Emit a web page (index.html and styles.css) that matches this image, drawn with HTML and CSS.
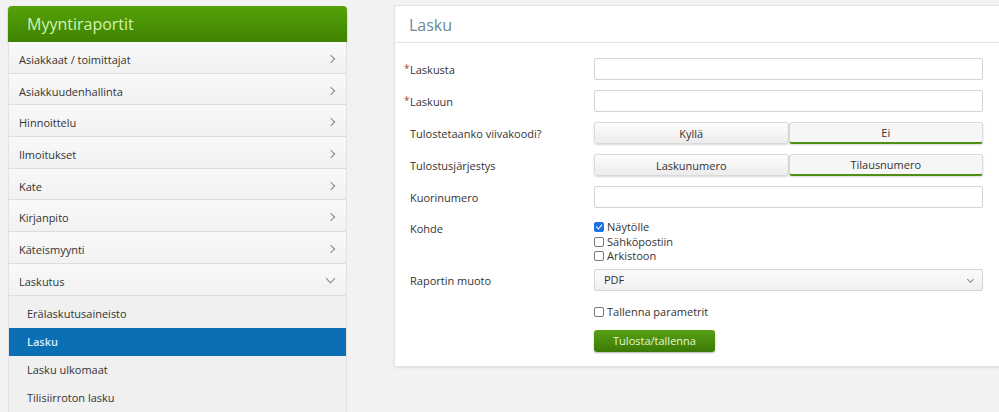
FILE: index.html
```html
<!DOCTYPE html>
<html lang="fi">
<head>
    <meta charset="UTF-8">
    <meta name="viewport" content="width=device-width, initial-scale=1.0">
    <title>Myyntiraportit - Lasku</title>
    <link rel="stylesheet" href="styles.css">
</head>
<body>
<div class="page">
    <nav class="sidebar">
        <div class="sidebar-title">Myyntiraportit</div>
        <ul class="menu">
            <li class="menu-item">Asiakkaat / toimittajat<span class="chev"></span></li>
            <li class="menu-item">Asiakkuudenhallinta<span class="chev"></span></li>
            <li class="menu-item">Hinnoittelu<span class="chev"></span></li>
            <li class="menu-item">Ilmoitukset<span class="chev"></span></li>
            <li class="menu-item">Kate<span class="chev"></span></li>
            <li class="menu-item">Kirjanpito<span class="chev"></span></li>
            <li class="menu-item">Käteismyynti<span class="chev"></span></li>
            <li class="menu-item open">Laskutus<span class="chev down"></span></li>
        </ul>
        <ul class="submenu">
            <li>Erälaskutusaineisto</li>
            <li class="active">Lasku</li>
            <li>Lasku ulkomaat</li>
            <li>Tilisiirroton lasku</li>
        </ul>
    </nav>

    <section class="panel">
        <h2 class="panel-title">Lasku</h2>
        <form class="report-form">
            <label class="lbl"><span class="req">*</span>Laskusta</label>
            <input type="text" class="field">

            <label class="lbl"><span class="req">*</span>Laskuun</label>
            <input type="text" class="field">

            <label class="lbl">Tulostetaanko viivakoodi?</label>
            <div class="toggle">
                <button type="button">Kyllä</button>
                <button type="button" class="on">Ei</button>
            </div>

            <label class="lbl">Tulostusjärjestys</label>
            <div class="toggle">
                <button type="button">Laskunumero</button>
                <button type="button" class="on">Tilausnumero</button>
            </div>

            <label class="lbl">Kuorinumero</label>
            <input type="text" class="field">

            <label class="lbl top">Kohde</label>
            <div class="checks">
                <label class="check"><span class="box checked"></span>Näytölle</label>
                <label class="check"><span class="box"></span>Sähköpostiin</label>
                <label class="check"><span class="box"></span>Arkistoon</label>
            </div>

            <label class="lbl">Raportin muoto</label>
            <div class="select">PDF<span class="sel-chev"></span></div>

            <span></span>
            <label class="check save"><span class="box"></span>Tallenna parametrit</label>

            <span></span>
            <div><button type="button" class="submit">Tulosta/tallenna</button></div>
        </form>
    </section>
</div>
</body>
</html>
```

FILE: styles.css
```css
html, body { margin: 0; padding: 0; }
body { background: #f2f2f2; font-family: "Open Sans", "Liberation Sans", sans-serif; font-size: 11px; color: #333; overflow: hidden; }

.page { display: flex; align-items: flex-start; gap: 47px; padding: 5px 0 0 8px; }

/* sidebar */
.sidebar { width: 339px; flex: none; margin-top: 1px; }
.sidebar-title { height: 36px; line-height: 36px; padding-left: 19px; font-size: 16px; color: #d3f3b0; background: linear-gradient(#55a10a, #3f8300); border-radius: 4px 4px 0 0; box-shadow: 0 1px 2px rgba(0,0,0,0.3); }
.menu, .submenu { list-style: none; margin: 0; padding: 0; border-left: 1px solid #e2e2e2; border-right: 1px solid #e2e2e2; }
.menu-item { position: relative; height: 26.7px; line-height: 28px; padding: 4px 0 0 10px; border-bottom: 1px solid #dedede; background: linear-gradient(#f9f9f9, #f1f1f1); color: #333; }
.chev { position: absolute; right: 12px; top: 14px; width: 5px; height: 5px; border-top: 1px solid #888; border-right: 1px solid #888; transform: rotate(45deg); }
.chev.down { top: 11px; right: 12px; width: 6px; height: 6px; transform: rotate(135deg); }
.submenu { background: #f0f0f0; padding-top: 4px; }
.submenu li { height: 28px; line-height: 28px; padding-left: 18px; color: #333; }
.submenu li.active { background: #0b6fb3; color: #d9eeff; font-weight: 600; }

/* panel */
.panel { width: 620px; flex: none; background: #fff; border: 1px solid #e3e3e3; height: 360px; box-shadow: 0 1px 2px rgba(0,0,0,0.08); }
.panel-title { margin: 0; height: 36px; line-height: 38px; padding-left: 14px; font-size: 16px; font-weight: normal; color: #6a8898; border-bottom: 1px solid #e3e3e3; }

.report-form { display: grid; grid-template-columns: 190px 389px; row-gap: 10px; padding: 15px 0 0 9px; align-items: center; }
.lbl { padding-left: 6px; position: relative; }
.lbl.top { align-self: start; padding-top: 3px; }
.req { position: absolute; left: 0; top: -1px; font-size: 10px; color: #b8433a; }

.field { box-sizing: border-box; height: 22px; border: 1px solid #d4d4d4; border-radius: 2px; margin: 0; padding: 0 8px; font: inherit; background: #fff; }

.toggle { display: flex; height: 22px; }
.toggle button { flex: 1; margin: 0; padding: 0; height: 22px; font: inherit; color: #333; border: 1px solid #dadada; background: linear-gradient(#fdfdfd, #ececec); border-radius: 3px; box-shadow: 0 1px 2px rgba(0,0,0,0.15); cursor: pointer; }
.toggle button.on { background: #f6f6f6; border-bottom: 2px solid #4f8f18; }

.checks { box-sizing: border-box; height: 41px; padding-top: 2px; display: flex; flex-direction: column; align-self: start; }
.check { display: flex; align-items: center; gap: 3px; height: 14.5px; flex: none; line-height: 14px; color: #333; }
.box { box-sizing: border-box; width: 10px; height: 10px; border: 1px solid #777; border-radius: 2px; background: #fff; position: relative; flex: none; }
.box.checked { background: #1a73e0; border-color: #1a73e0; }
.box.checked::after { content: ""; position: absolute; left: 2px; top: 0px; width: 3px; height: 5px; border-right: 1.5px solid #fff; border-bottom: 1.5px solid #fff; transform: rotate(40deg); }
.save { margin-top: 4px; }

.select { box-sizing: border-box; height: 22px; line-height: 20px; border: 1px solid #d4d4d4; border-radius: 2px; padding-left: 9px; background: linear-gradient(#fbfbfb, #f0f0f0); position: relative; }
.sel-chev { position: absolute; right: 9px; top: 7px; width: 4px; height: 4px; border-right: 1px solid #888; border-bottom: 1px solid #888; transform: rotate(45deg); }

.submit { display: block; width: 121px; height: 22px; font: inherit; color: #e6f7d2; border: none; border-radius: 3px; background: linear-gradient(#58a016, #3b7a06); box-shadow: 0 1px 2px rgba(0,0,0,0.3); cursor: pointer; }
```
